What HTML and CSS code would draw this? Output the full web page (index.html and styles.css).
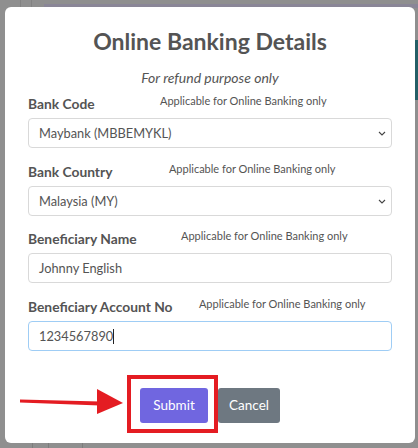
FILE: index.html
```html
<!DOCTYPE html>
<html>
<head>
<meta charset="utf-8">
<link rel="stylesheet" href="styles.css">
</head>
<body>
<div class="backdrop">
  <div class="topstrip"></div>
  <div class="vline v1"></div>
  <div class="vline v2"></div>
  <div class="bline b1"></div>
  <div class="bline b2"></div>
  <div class="bline b3"></div>
  <div class="teal"></div>
  <div class="modal">
    <h2 class="title">Online Banking Details</h2>
    <p class="subtitle">For refund purpose only</p>
    <form class="form">
      <div class="field">
        <div class="label-row"><span class="label">Bank Code</span><span class="hint">Applicable for Online Banking only</span></div>
        <div class="select-wrap">
          <div class="control">Maybank (MBBEMYKL)</div>
          <svg class="chev" width="8" height="5" viewBox="0 0 8 5"><path d="M1 1l3 3 3-3" fill="none" stroke="#444" stroke-width="1.1"/></svg>
        </div>
      </div>
      <div class="field">
        <div class="label-row"><span class="label">Bank Country</span><span class="hint">Applicable for Online Banking only</span></div>
        <div class="select-wrap">
          <div class="control">Malaysia (MY)</div>
          <svg class="chev" width="8" height="5" viewBox="0 0 8 5"><path d="M1 1l3 3 3-3" fill="none" stroke="#444" stroke-width="1.1"/></svg>
        </div>
      </div>
      <div class="field">
        <div class="label-row"><span class="label">Beneficiary Name</span><span class="hint">Applicable for Online Banking only</span></div>
        <div class="control">Johnny English</div>
      </div>
      <div class="field">
        <div class="label-row"><span class="label">Beneficiary Account No</span><span class="hint">Applicable for Online Banking only</span></div>
        <div class="control focused">1234567890<span class="caret"></span></div>
      </div>
    </form>
    <div class="actions">
      <button class="btn confirm" type="button">Submit</button>
      <button class="btn cancel" type="button">Cancel</button>
      <div class="redbox"></div>
    </div>
    <svg class="arrow" width="110" height="30" viewBox="0 0 110 30">
      <path d="M0 11.5 L80 13.5 L80 17.5 L0 14.5 Z" fill="#e41c22"/>
      <path d="M77 1 L103 15 L77 26 Z" fill="#e41c22"/>
    </svg>
  </div>
</div>
</body>
</html>
```
FILE: styles.css
```css
* { box-sizing: border-box; }
html, body { margin: 0; padding: 0; }
body {
  width: 418px;
  height: 448px;
  overflow: hidden;
  font-family: Lato, "Liberation Sans", sans-serif;
}
.backdrop {
  position: relative;
  width: 418px;
  height: 448px;
  background: #8f8f8f;
  padding: 7px 3px 5px 5px;
}
.topstrip {
  position: absolute;
  left: 44px; top: 4px; right: 0; height: 4px;
  background: #8a8697;
}
.vline { position: absolute; top: 0; height: 56px; width: 1px; background: #828282; }
.v1 { left: 20px; }
.v2 { left: 31px; }
.bline { position: absolute; bottom: 0; height: 5px; width: 1px; background: #7d7d7d; }
.b1 { left: 32px; }
.b2 { left: 48px; }
.b3 { left: 82px; }
.teal {
  position: absolute;
  right: 0; top: 40px; width: 3px; height: 60px;
  background: #245e66;
}
.modal {
  position: relative;
  width: 410px;
  height: 436px;
  background: #fff;
  border-radius: 6px;
  padding: 18px 23px 0 23px;
  color: #545454;
}
.title {
  margin: 0;
  text-align: center;
  font-size: 23px;
  font-weight: 700;
  line-height: 32px;
  color: #545454;
}
.subtitle {
  margin: 12px 0 0;
  text-align: center;
  font-style: italic;
  font-size: 14px;
  line-height: 18px;
}
.form {
  display: flex;
  flex-direction: column;
  gap: 13.5px;
  margin-top: 7px;
}
.field { display: flex; flex-direction: column; gap: 4px; }
.label-row { display: flex; align-items: flex-start; height: 20px; }
.label {
  font-size: 13.8px;
  font-weight: 700;
  line-height: 20px;
}
.hint {
  flex: 1;
  text-align: center;
  font-size: 11px;
  line-height: 16px;
  position: relative;
  top: -1px;
}
.select-wrap { position: relative; }
.control {
  height: 30px;
  border: 1px solid #d9d9d9;
  border-radius: 4px;
  padding: 0 10px;
  font-size: 12.8px;
  line-height: 28px;
  color: #545454;
  background: #fff;
}
.focused { border-color: #9fcdf5; }
.caret {
  display: inline-block;
  width: 1px;
  height: 15px;
  background: #222;
  vertical-align: -3px;
}
.chev { position: absolute; right: 6px; top: 13px; }
.actions {
  position: relative;
  display: flex;
  justify-content: center;
  gap: 10px;
  margin-top: 37px;
}
.btn {
  height: 35px;
  border: 0;
  border-radius: 3px;
  color: #fff;
  font-family: inherit;
  font-size: 13.5px;
  padding: 0;
}
.confirm { background: #7066e0; width: 68px; }
.cancel { background: #6e7881; width: 62px; }
.redbox {
  position: absolute;
  left: 99px; top: -13px;
  width: 91px; height: 58px;
  border: 4px solid #e41c22;
}
.arrow { position: absolute; left: 15px; top: 381px; }
```
